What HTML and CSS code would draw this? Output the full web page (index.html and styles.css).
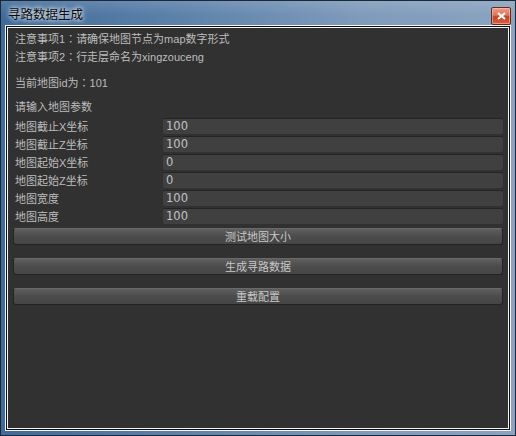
FILE: index.html
```html
<!DOCTYPE html>
<html>
<head>
<meta charset="utf-8">
<link rel="stylesheet" href="styles.css">
</head>
<body>
<div class="window">
  <div class="titlebar">
    <span class="title">寻路数据生成</span>
    <div class="close">
      <svg width="9" height="8" viewBox="0 0 9 8"><path d="M1 1 L8 7 M8 1 L1 7" stroke="#fff" stroke-width="2.2" fill="none"/></svg>
    </div>
  </div>
  <div class="client">
    <div class="content">
      <div class="line">注意事项1<span class="colon">：</span>请确保地图节点为map数字形式</div>
      <div class="line">注意事项2<span class="colon">：</span>行走层命名为xingzouceng</div>
      <div class="line id-line">当前地图id为<span class="colon">：</span>101</div>
      <div class="line head-line">请输入地图参数</div>
      <div class="fields">
        <div class="row"><span class="label">地图截止X坐标</span><div class="field">100</div></div>
        <div class="row"><span class="label">地图截止Z坐标</span><div class="field">100</div></div>
        <div class="row"><span class="label">地图起始X坐标</span><div class="field">0</div></div>
        <div class="row"><span class="label">地图起始Z坐标</span><div class="field">0</div></div>
        <div class="row"><span class="label">地图宽度</span><div class="field">100</div></div>
        <div class="row"><span class="label">地图高度</span><div class="field">100</div></div>
      </div>
      <div class="buttons">
        <div class="btn">测试地图大小</div>
        <div class="btn">生成寻路数据</div>
        <div class="btn">重载配置</div>
      </div>
    </div>
  </div>
</div>
</body>
</html>
```
FILE: styles.css
```css
* { box-sizing: border-box; }
html, body { margin: 0; padding: 0; background: #3c5f86; }
.window {
  width: 516px;
  height: 436px;
  display: flex;
  flex-direction: column;
  background: linear-gradient(90deg, #3f6b9a 0%, #5d82aa 35%, #7f9bbb 70%, #8aa3c0 100%);
  border: 1px solid #1a2838;
  font-family: "Liberation Sans", "Noto Sans CJK SC", sans-serif;
}
.titlebar {
  height: 24px;
  display: flex;
  align-items: center;
  justify-content: space-between;
  padding: 0 4px 0 7px;
  background: linear-gradient(180deg, rgba(255,255,255,0.12) 0%, rgba(255,255,255,0) 60%);
}
.title {
  font-family: "Noto Sans CJK SC", sans-serif;
  font-size: 12.5px;
  color: #0c0c0c;
  text-shadow: 0 0 4px #ffffff, 0 0 6px rgba(255,255,255,0.8);
  line-height: 14px;
  margin-top: 1px;
}
.close {
  width: 20px;
  height: 18px;
  margin-top: 5px;
  border: 1px solid #6a2a1e;
  border-radius: 2px;
  background: linear-gradient(180deg, #eb9d86 0%, #df7458 45%, #c8401f 55%, #d8623f 100%);
  box-shadow: inset 0 0 0 1px rgba(255,220,200,0.45);
  display: flex;
  align-items: center;
  justify-content: center;
}
.client {
  flex: 1;
  margin: 0 4px 4px 4px;
  border: 1px solid #f4f4f4;
  padding: 2px;
  background: #1c1c1c;
  box-shadow: inset 0 0 0 1px #111, inset 0 0 0 2px #f4f4f4;
  display: flex;
}
.content {
  flex: 1;
  background: #313131;
  padding: 1px 5px 0 5px;
  display: flex;
  flex-direction: column;
  color: #bdbdbd;
  font-size: 11px;
}
.colon {
  font-family: "Noto Sans CJK TC", sans-serif;
}
.line {
  height: 18px;
  line-height: 18px;
  padding-left: 2px;
}
.id-line { margin-top: 8px; }
.head-line { margin-top: 7px; }
.fields {
  display: flex;
  flex-direction: column;
  margin-top: 1px;
}
.row {
  height: 18px;
  display: flex;
  align-items: center;
}
.label {
  width: 150px;
  padding-left: 2px;
  flex: none;
}
.field {
  flex: 1;
  height: 16px;
  line-height: 15px;
  background: #404040;
  border-top: 1px solid #242424;
  border-radius: 2px;
  padding-left: 3px;
  font-size: 11.5px;
  font-family: "DejaVu Sans", sans-serif;
  color: #c3c3c3;
}
.buttons {
  display: flex;
  flex-direction: column;
  gap: 13px;
  margin-top: 3px;
}
.btn {
  height: 17px;
  line-height: 15px;
  text-align: center;
  border-radius: 3px;
  background: linear-gradient(180deg, #5e5e5e 0%, #4c4c4c 50%, #454545 100%);
  border: 1px solid #242424;
  border-top-color: #6a6a6a;
  color: #c8c8c8;
  font-size: 11px;
  font-family: "Noto Sans CJK SC", sans-serif;
}
```
